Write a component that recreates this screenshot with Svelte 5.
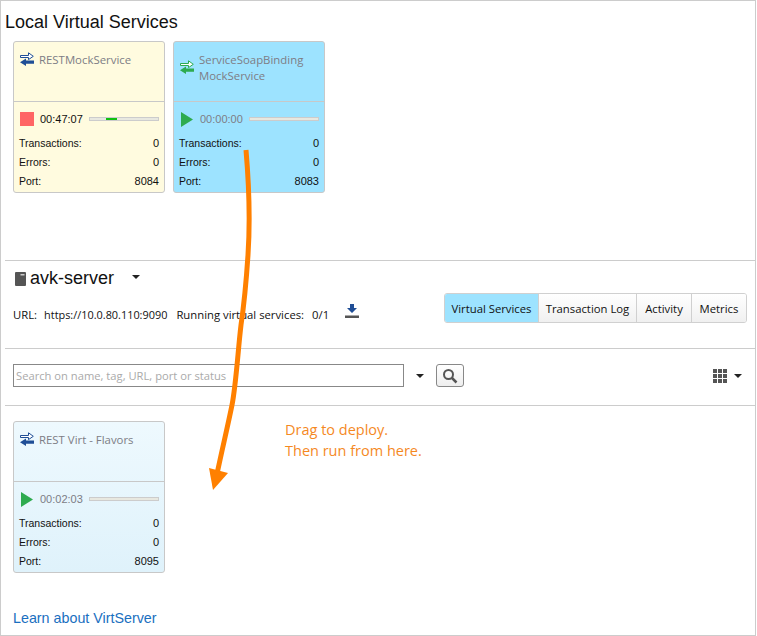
<script>
	const local = [
		{ name: ["RESTMockService"], tone: "yellow", arrows: "#1f4e96", running: true, time: "00:47:07", trans: 0, errors: 0, port: 8084 },
		{ name: ["ServiceSoapBinding", "MockService"], tone: "blue", arrows: "#2eab4f", running: false, time: "00:00:00", trans: 0, errors: 0, port: 8083 },
	];
	const deployed = { name: ["REST Virt - Flavors"], tone: "pale", arrows: "#1f4e96", running: false, time: "00:02:03", trans: 0, errors: 0, port: 8095 };
	const tabs = ["Virtual Services", "Transaction Log", "Activity", "Metrics"];
</script>

{#snippet card(s)}
	<div class="card {s.tone}">
		<div class="card-top">
			<svg class="swap" width="14" height="14" viewBox="0 0 14 14">
				<path d="M.5 3.500H8.500V.8L13.300 4.300 8.500 7.600V5.500H.5z" fill="#fff" stroke={s.arrows} stroke-width="1" />
				<path d="M14 8.500H6V6.500L0 10.200 6 14V11.800H14z" fill={s.arrows} />
			</svg>
			<div class="name">
				{#each s.name as line}<div>{line}</div>{/each}
			</div>
		</div>
		<div class="card-bottom">
			<div class="status">
				{#if s.running}
					<span class="stop"></span>
				{:else}
					<svg class="play" width="14" height="15" viewBox="0 0 14 15"><path d="M1 0l12 7.500L1 15z" fill="#2eab4f" /></svg>
				{/if}
				<span class="time" class:on={s.running}>{s.time}</span>
				<span class="track">
					{#if s.running}<span class="progress"></span>{/if}
				</span>
			</div>
			<div class="stat"><span>Transactions:</span><span class="val">{s.trans}</span></div>
			<div class="stat"><span>Errors:</span><span class="val">{s.errors}</span></div>
			<div class="stat"><span>Port:</span><span class="val">{s.port}</span></div>
		</div>
	</div>
{/snippet}

<div class="page">
	<section class="local">
		<h1>Local Virtual Services</h1>
		<div class="cards">
			{#each local as s}
				{@render card(s)}
			{/each}
		</div>
	</section>

	<section class="server">
		<div class="server-title">
			<svg width="11" height="14" viewBox="0 0 11 14"><rect width="11" height="14" rx="1" fill="#555" /><rect x="5.500" y="2" width="4" height="1.500" fill="#ccc" /></svg>
			<h2>avk-server</h2>
			<span class="caret big"></span>
		</div>
		<div class="server-info">
			<div class="url">
				<span>URL:</span>
				<span class="addr">https://10.0.80.110:9090</span>
				<span>Running virtual services:</span>
				<span>0/1</span>
				<svg width="14" height="14" viewBox="0 0 14 14"><path d="M5 0h4v4h3L7 9 2 4h3z" fill="#1f4e96" /><rect y="11.500" width="14" height="2.500" fill="#555" /></svg>
			</div>
			<div class="tabs">
				{#each tabs as t, i}
					<div class="tab" class:active={i == 0}>{t}</div>
				{/each}
			</div>
		</div>
	</section>

	<section class="search">
		<div class="search-input">Search on name, tag, URL, port or status</div>
		<span class="caret"></span>
		<div class="search-btn">
			<svg width="16" height="16" viewBox="0 0 16 16"><circle cx="6.500" cy="6.500" r="4.500" fill="none" stroke="#555" stroke-width="2" /><path d="M10 10l4.500 4.500" stroke="#555" stroke-width="2.500" /></svg>
		</div>
		<div class="view">
			<svg width="14" height="14" viewBox="0 0 14 14" fill="#555">
				{#each [0, 5, 10] as y}
					{#each [0, 5, 10] as x}
						<rect {x} {y} width="4" height="4" />
					{/each}
				{/each}
			</svg>
			<span class="caret"></span>
		</div>
	</section>

	<section class="deployed">
		{@render card(deployed)}
		<div class="hint">Drag to deploy.<br />Then run from here.</div>
	</section>

	<a class="learn" href="#learn">Learn about VirtServer</a>

	<svg class="arrow" width="757" height="636" viewBox="0 0 757 636">
		<path d="M246 150C249 185 250 225 248 255 246 285 244 305 241 325 238 350 236 385 232 405 228 425 222 450 217 474" fill="none" stroke="#ff8000" stroke-width="5" />
		<path d="M213 490L209 468 228 473z" fill="#ff8000" />
	</svg>
</div>

<style>
	:global(body) {
		margin: 0;
		background: #fff;
	}

	.page {
		position: relative;
		box-sizing: border-box;
		width: 756px;
		height: 636px;
		border: 1px solid #ccc;
		font-family: "Liberation Sans", Arial, sans-serif;
		color: #111;
		overflow: hidden;
	}

	section {
		box-sizing: border-box;
		margin-left: 4px;
	}

	.local {
		height: 260px;
		border-bottom: 1px solid #ccc;
		padding-top: 12px;
	}

	h1 {
		margin: 0 0 9px;
		font-size: 18px;
		font-weight: normal;
		line-height: 19px;
	}

	.cards {
		display: flex;
		gap: 8px;
		margin-left: 8px;
	}

	.card {
		box-sizing: border-box;
		width: 152px;
		height: 152px;
		border: 1px solid #c8c8c8;
		border-radius: 3px;
	}

	.yellow {
		background: #fffbdf;
	}

	.blue {
		background: #9de3ff;
	}

	.pale {
		background: linear-gradient(#eef9fe, #dff2fb);
	}

	.card-top {
		box-sizing: border-box;
		height: 60px;
		border-bottom: 1px solid #c8c8c8;
		padding: 10px 0 0 6px;
		display: flex;
		gap: 5px;
	}

	.swap {
		flex: none;
	}

	.blue .swap {
		margin-top: 8px;
	}

	.name {
		font-family: "Open Sans", sans-serif;
		font-size: 11.400px;
		line-height: 16px;
		color: #7d7d85;
	}

	.card-bottom {
		padding: 9px 5px 0 6px;
	}

	.status {
		display: flex;
		align-items: center;
		height: 16px;
		margin-bottom: 7px;
	}

	.stop {
		width: 14px;
		height: 14px;
		background: #ff6565;
		flex: none;
	}

	.play {
		flex: none;
	}

	.time {
		font-size: 11px;
		margin-left: 6px;
		color: #7d7d85;
	}

	.time.on {
		color: #111;
	}

	.track {
		position: relative;
		box-sizing: border-box;
		width: 70px;
		height: 4px;
		margin-left: auto;
		background: #e8e8e0;
		border: 1px solid #ccc;
	}

	.progress {
		position: absolute;
		left: 16px;
		top: 0;
		width: 11px;
		height: 2px;
		background: #10c010;
	}

	.stat {
		display: flex;
		justify-content: space-between;
		margin-left: -1px;
		font-size: 10.500px;
		line-height: 19px;
	}

	.val {
		font-size: 11px;
	}

	.server {
		height: 88px;
		border-bottom: 1px solid #ccc;
		padding-left: 10px;
	}

	.server-title {
		display: flex;
		align-items: center;
		height: 34px;
		padding-top: 1px;
		box-sizing: border-box;
	}

	h2 {
		margin: 0 0 0 4px;
		font-size: 18px;
		font-weight: normal;
	}

	.caret {
		display: inline-block;
		width: 0;
		height: 0;
		border: 4px solid transparent;
		border-top: 4px solid #222;
		border-bottom: 0;
	}

	.caret.big {
		margin-left: 18px;
		margin-bottom: 3px;
	}

	.server-info {
		display: flex;
		justify-content: space-between;
		align-items: flex-start;
		padding-right: 8px;
		margin-top: -2px;
	}

	.url {
		display: flex;
		align-items: center;
		margin: 11px 0 0 -2px;
		font-family: "Open Sans", sans-serif;
		font-size: 11.300px;
	}

	.url span:nth-child(1) {
		margin-right: 7px;
	}

	.addr {
		font-size: 10.900px;
		margin-right: 9px;
	}

	.url span:nth-child(3) {
		margin-right: 8px;
	}

	.url svg {
		margin-left: 16px;
		margin-bottom: 6px;
	}

	.tabs {
		display: grid;
		grid-template-columns: 93px 98px 55px 55px;
		height: 28px;
		border: 1px solid #d0d0d0;
		border-radius: 3px;
		overflow: hidden;
		font-family: "Open Sans", sans-serif;
		font-size: 11.300px;
	}

	.tab {
		display: flex;
		align-items: center;
		justify-content: center;
		background: linear-gradient(#fff, #f0f0f0);
		border-left: 1px solid #d0d0d0;
	}

	.tab.active {
		background: #9de3ff;
		border-left: 0;
	}

	.search {
		height: 57px;
		border-bottom: 1px solid #ccc;
		padding: 15px 13px 0 8px;
		display: flex;
		align-items: flex-start;
	}

	.search-input {
		box-sizing: border-box;
		width: 391px;
		height: 23px;
		border: 1px solid #888;
		padding-left: 2px;
		font-family: "Open Sans", sans-serif;
		font-size: 11.200px;
		line-height: 21px;
		color: #aaa;
	}

	.search > .caret {
		margin: 10px 12px 0 12px;
	}

	.search-btn {
		box-sizing: border-box;
		width: 28px;
		height: 23px;
		border: 1px solid #888;
		border-radius: 3px;
		background: linear-gradient(#fff, #eee);
		display: flex;
		align-items: center;
		justify-content: center;
	}

	.view {
		margin-left: auto;
		display: flex;
		align-items: center;
		gap: 7px;
		height: 23px;
	}

	.deployed {
		position: relative;
		height: 190px;
		padding: 15px 0 0 8px;
		display: flex;
		gap: 120px;
	}

	.hint {
		margin-top: -2px;
		font-family: "Open Sans", sans-serif;
		font-size: 14.500px;
		line-height: 21px;
		color: #f5891f;
	}

	.learn {
		display: block;
		margin: 14px 0 0 12px;
		font-size: 14.300px;
		color: #1a6fc0;
		text-decoration: none;
	}

	.arrow {
		position: absolute;
		left: -1px;
		top: -1px;
		pointer-events: none;
	}
</style>
